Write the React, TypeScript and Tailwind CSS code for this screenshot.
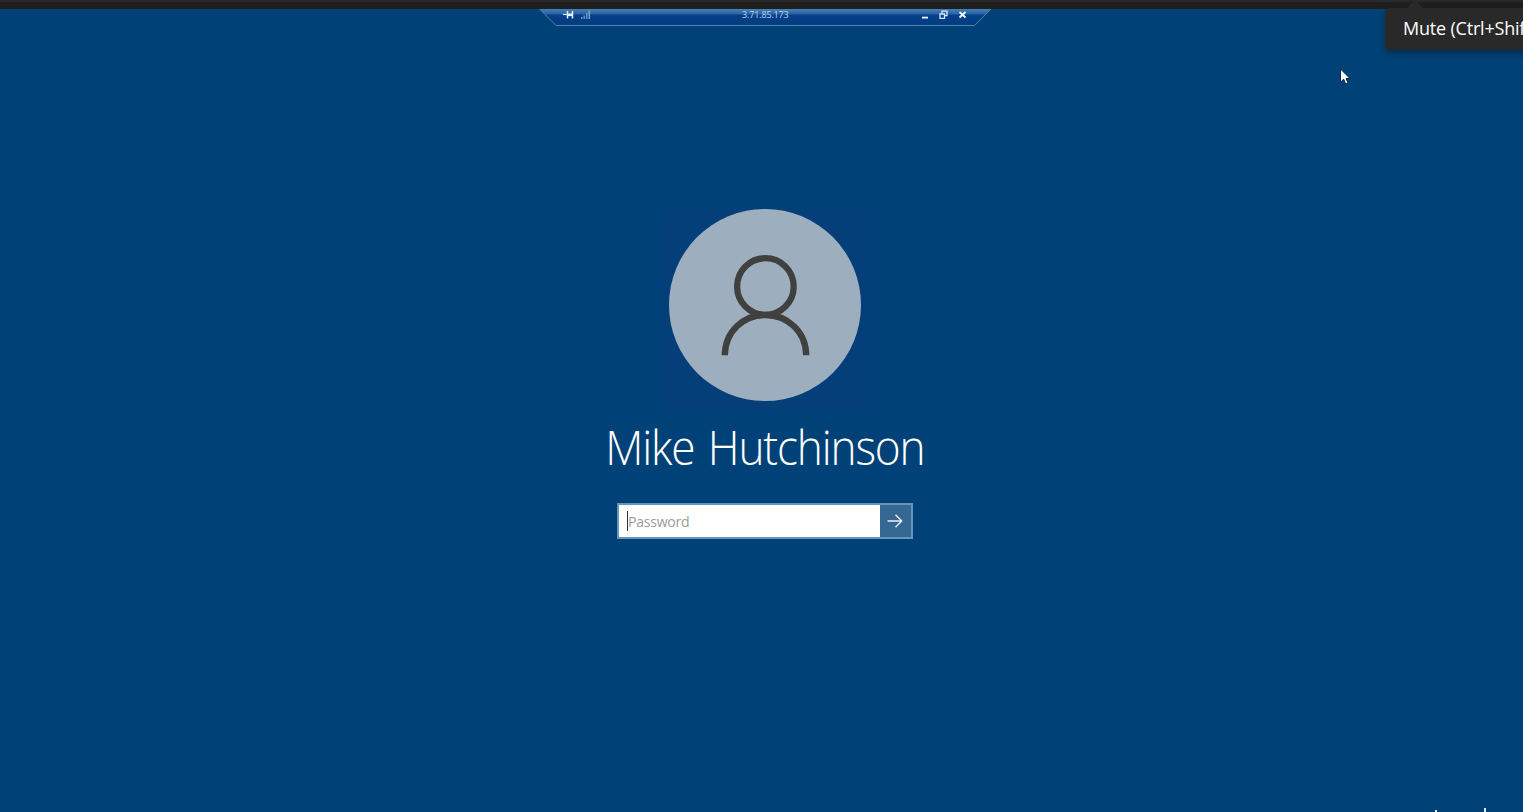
function ConnectionBar() {
  return (
    <div className="relative ml-[539px] h-[17px] w-[452px] shrink-0">
      <svg className="absolute inset-0" width="452" height="17" viewBox="0 0 452 17" fill="none">
        <defs>
          <linearGradient id="bar" x1="0" y1="0" x2="0" y2="17" gradientUnits="userSpaceOnUse">
            <stop offset="0" stopColor="#4680b5" />
            <stop offset="0.28" stopColor="#2a66a4" />
            <stop offset="0.36" stopColor="#07408a" />
            <stop offset="0.8" stopColor="#023c82" />
            <stop offset="1" stopColor="#0a447f" />
          </linearGradient>
        </defs>
        <path d="M0.5 0L17 16.5H435.5L452 0Z" fill="url(#bar)" />
        <path d="M0.5 0L17 16.5H435.5L452 0" stroke="#4f83ad" />
      </svg>
      <div className="relative flex h-[11px] items-center pl-[24px] pr-[24px]">
        <svg width="11" height="10" viewBox="0 0 11 10" fill="none" stroke="#e6f0fa">
          <path d="M0 4.5H4" strokeWidth="1.2" />
          <path d="M4.5 1V8.5M9.5 1V8.5" strokeWidth="1.5" />
          <path d="M5 4.8H9" strokeWidth="2.6" />
        </svg>
        <svg className="ml-[7px]" width="10" height="10" viewBox="0 0 10 10" fill="none" stroke="#7fa3c9">
          <path d="M0.8 7V9M3.2 5.5V9M5.8 3V9" strokeWidth="1.3" />
          <path d="M8.3 0.5V9" strokeWidth="1.5" />
        </svg>
        <span className="ml-[151px] w-[46px] whitespace-nowrap text-[9px] leading-[12px] tracking-[-0.15px] text-[#bdd2e8]">
          3.71.85.173
        </span>
        <div className="ml-auto flex items-center gap-[10px]">
          <svg width="8" height="10" viewBox="0 0 8 10">
            <path d="M1 7.6H7" stroke="#eef6fd" strokeWidth="1.8" />
          </svg>
          <svg width="9" height="10" viewBox="0 0 9 10" fill="none" stroke="#d5e5f4" strokeWidth="1.3">
            <path d="M3 3.5V1.2H8V5.6H6" />
            <path d="M1 4H5.5V8.4H1Z" />
          </svg>
          <svg width="9" height="10" viewBox="0 0 9 10">
            <path d="M1.5 2L7.5 7.5M7.5 2L1.5 7.5" stroke="#f2f8ff" strokeWidth="1.8" />
          </svg>
        </div>
      </div>
    </div>
  );
}

function Avatar() {
  return (
    <div className="flex h-[203px] w-[204px] justify-center bg-[#043f79]">
      <div className="h-[192px] w-[192px] shrink-0 rounded-full bg-[#9dafbf]">
        <svg width="192" height="192" viewBox="0 0 192 192" fill="none" stroke="#40403f" strokeWidth="6.3">
          <circle cx="96.4" cy="77.5" r="28.3" />
          <path d="M55.8 146.3C56 122 75 106 96.4 106S137 122 137.2 146.3" />
        </svg>
      </div>
    </div>
  );
}

export default function App() {
  return (
    <div className="relative flex h-[812px] w-full flex-col overflow-hidden bg-[#004277] font-['Open_Sans','Noto_Sans',sans-serif]">
      <div className="h-[9px] shrink-0 border-t-2 border-[#292929] bg-[#1f1f1f]" />
      <ConnectionBar />

      <main className="flex w-[1530px] flex-col items-center pt-[183px]">
        <Avatar />
        <h1 className="mt-[5px] origin-center scale-x-[0.94] whitespace-nowrap text-[47px] font-light leading-[60px] tracking-[-1.25px] text-white [word-spacing:3.5px]">
          Mike Hutchinson
        </h1>
        <form className="mt-[26px] flex h-[36px] w-[296px] border-2 border-[#6896b9] bg-white">
          <div className="flex flex-1 items-center pl-[8px]">
            <span className="h-[20px] w-px bg-[#303030]" />
            <span className="origin-left scale-x-[0.94] text-[15px] leading-5 tracking-[-0.3px] text-[#9b9b9b]">
              Password
            </span>
          </div>
          <button type="button" aria-label="Submit" className="flex w-[31px] items-center justify-center bg-[#346792] pr-[2px]">
            <svg width="16" height="16" viewBox="0 0 16 16" fill="none" stroke="#e7f0f7" strokeWidth="1.4">
              <path d="M0.5 8H14.5M8.5 1.8L14.7 8L8.5 14.2" />
            </svg>
          </button>
        </form>
      </main>

      <div className="absolute left-[1385px] top-[8px] flex h-[42px] w-[170px] items-center rounded-[5px] bg-[#292929] pb-[2px] pl-[18px] shadow-[0_3px_9px_rgba(0,0,0,0.35)]">
        <svg className="absolute left-[20px] top-[-7px]" width="24" height="8" viewBox="0 0 24 8">
          <path d="M0 8Q3 7 6 3L8 1H12L14 3Q17 7 21 8Z" fill="#292929" />
        </svg>
        <span className="whitespace-nowrap text-[18px] leading-6 tracking-[-0.2px] text-white">Mute (Ctrl+Shift+M)</span>
      </div>

      <svg className="absolute left-[1339px] top-[68px]" width="13" height="19" viewBox="0 0 13 19">
        <path d="M1.5 1V14.2L4.7 11.2L6.6 16L9 15L7.1 10.5H11Z" fill="#fff" stroke="#082a45" strokeWidth="1" />
      </svg>

      <svg className="absolute left-[1430px] top-[807px]" width="60" height="5" viewBox="0 0 60 5">
        <path d="M5 3H7V5H5ZM54 1H56V5H54Z" fill="#d9e8f3" />
      </svg>
    </div>
  );
}
